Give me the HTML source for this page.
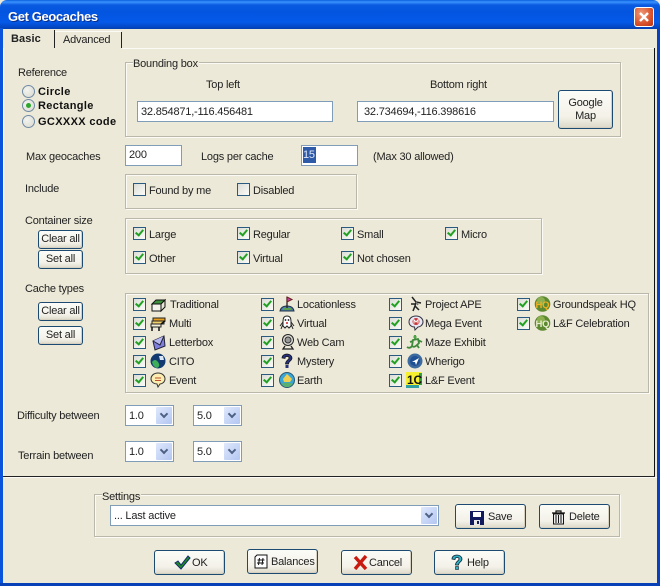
<!DOCTYPE html>
<html><head><meta charset="utf-8"><title>Get Geocaches</title>
<style>
html,body{margin:0;padding:0;background:#ece9d8}
#w{position:relative;width:660px;height:586px;overflow:hidden;background:#ece9d8;font:11px "Liberation Sans",sans-serif;color:#222;letter-spacing:-.2px}
#w *{box-sizing:border-box}
.t{position:absolute;white-space:nowrap;line-height:14px;height:14px}
.bd{font-weight:bold;letter-spacing:.35px;color:#111}
.g{position:absolute;border:1px solid #b9b8ab;box-shadow:inset 1px 1px 0 #fbfaf4,1px 1px 0 #fbfaf4}
.l{position:absolute;background:#ece9d8;padding:0 1px 0 0;white-space:nowrap;line-height:12px}
.i{position:absolute;background:#fff;border:1px solid #7f9db9;line-height:19px;padding-left:6px;white-space:nowrap}
.b{position:absolute;border:1px solid #1c4a70;border-radius:3px;background:linear-gradient(#fcfcf8,#f3f1e8 70%,#dcd8c8);text-align:center;white-space:nowrap;box-shadow:inset -1px -1px 0 #d6d0c0}
.c{position:absolute;width:13px;height:13px;border:1px solid #2a5a80;background:linear-gradient(135deg,#dcdcd7,#fbfbf8)}
.k::after{content:"";position:absolute;box-sizing:border-box;left:3px;top:0;width:5px;height:8px;border:solid #21a121;border-width:0 2px 2px 0;transform:rotate(40deg)}
.r{position:absolute;width:13px;height:13px;border-radius:50%;border:1px solid #6f8aa4;background:radial-gradient(circle at 35% 35%,#f4f4f0,#d8d8cf)}
.d{position:absolute;width:16px;height:17px;top:1px;right:1px;background:linear-gradient(135deg,#dfe8fc,#b3c6f2);border-radius:1px}
.d::after{content:"";position:absolute;box-sizing:border-box;left:5px;top:4px;width:6px;height:6px;border:solid #4d6185;border-width:0 2px 2px 0;transform:rotate(45deg)}
svg{position:absolute;display:block}
</style></head><body><div id="w">

<!-- title bar -->
<div style="position:absolute;left:0;top:0;width:660px;height:29px;border-radius:7px 7px 0 0;background:linear-gradient(#0a5fdc 0,#3a93ff 2px,#0a5ae0 5px,#0355e0 12px,#0459e8 22px,#0347c4 27px,#033fb0 29px)"></div>
<div class="t" style="left:8px;top:9px;font-weight:bold;font-size:13px;color:#fff;line-height:15px;height:15px;letter-spacing:-.38px;text-shadow:1px 1px 0 #0a2f8c">Get Geocaches</div>
<div style="position:absolute;left:634px;top:7px;width:20px;height:20px;border:1px solid #fff;border-radius:3px;background:radial-gradient(circle at 35% 30%,#ee9a78,#d9532c 60%,#b93212)"></div>
<svg style="left:634px;top:7px" width="20" height="20"><path d="M6 6L14 14M14 6L6 14" stroke="#fff" stroke-width="2.4" fill="none"/></svg>

<!-- borders -->
<div style="position:absolute;left:0;top:28px;width:3px;height:558px;background:#0a54dc"></div>
<div style="position:absolute;left:657px;top:28px;width:3px;height:558px;background:#0a3fc0"></div>
<div style="position:absolute;left:0;top:583px;width:660px;height:3px;background:#0840b8"></div>

<!-- tabs -->
<div style="position:absolute;left:122px;top:48px;width:533px;height:1px;background:#fbfaf4"></div>
<div style="position:absolute;left:654px;top:48px;width:1px;height:429px;background:#111"></div>
<div style="position:absolute;left:3px;top:476px;width:652px;height:1px;background:#222"></div>
<div style="position:absolute;left:3px;top:477px;width:654px;height:1px;background:#fbfaf4"></div>
<div style="position:absolute;left:3px;top:48px;width:1px;height:428px;background:#fbfaf4"></div>
<div class="t" style="left:11px;top:32px;font-weight:bold;letter-spacing:.1px">Basic</div>
<div style="position:absolute;left:54px;top:30px;width:1px;height:18px;background:#222"></div>
<div style="position:absolute;left:55px;top:31px;width:66px;height:1px;background:#fbfaf4"></div>
<div class="t" style="left:63px;top:33px">Advanced</div>
<div style="position:absolute;left:121px;top:32px;width:1px;height:16px;background:#222"></div>

<!-- reference -->
<div class="t" style="left:18px;top:66px">Reference</div>
<div class="r" style="left:22px;top:85px"></div><div class="t bd" style="left:38px;top:85px">Circle</div>
<div class="r" style="left:22px;top:99px"></div><div style="position:absolute;left:26px;top:103px;width:5px;height:5px;border-radius:50%;background:#2ea62e"></div><div class="t bd" style="left:38px;top:99px">Rectangle</div>
<div class="r" style="left:22px;top:115px"></div><div class="t bd" style="left:38px;top:115px">GCXXXX code</div>

<!-- bounding box -->
<div class="g" style="left:125px;top:62px;width:496px;height:75px"></div>
<div class="l" style="left:133px;top:58px;line-height:13px">Bounding box</div>
<div class="t" style="left:206px;top:78px">Top left</div>
<div class="t" style="left:430px;top:78px">Bottom right</div>
<div class="i" style="left:137px;top:101px;width:196px;height:21px;line-height:20px;padding-left:3px">32.854871,-116.456481</div>
<div class="i" style="left:357px;top:101px;width:197px;height:21px;line-height:20px;padding-left:6px">32.734694,-116.398616</div>
<div class="b" style="left:558px;top:90px;width:55px;height:39px;line-height:13px;padding-top:6px">Google<br>Map</div>

<!-- max -->
<div class="t" style="left:26px;top:150px">Max geocaches</div>
<div class="i" style="left:125px;top:145px;width:57px;height:21px;padding-left:3px">200</div>
<div class="t" style="left:201px;top:150px">Logs per cache</div>
<div class="i" style="left:301px;top:145px;width:57px;height:21px"></div>
<div class="t" style="left:303px;top:147px;width:13px;height:16px;background:#2f5aa8;color:#dfe6f5;line-height:17px">15</div>
<div class="t" style="left:373px;top:150px">(Max 30 allowed)</div>

<!-- include -->
<div class="t" style="left:25px;top:182px">Include</div>
<div class="g" style="left:125px;top:174px;width:232px;height:35px"></div>
<div class="c" style="left:133px;top:183px"></div><div class="t" style="left:149px;top:184px">Found by me</div>
<div class="c" style="left:237px;top:183px"></div><div class="t" style="left:253px;top:184px">Disabled</div>

<!-- container -->
<div class="t" style="left:25px;top:214px">Container size</div>
<div class="b" style="left:38px;top:230px;width:45px;height:19px;line-height:17px">Clear all</div>
<div class="b" style="left:38px;top:250px;width:45px;height:19px;line-height:17px">Set all</div>
<div class="g" style="left:125px;top:218px;width:417px;height:56px"></div>
<div class="c k" style="left:133px;top:227px"></div><div class="t" style="left:149px;top:228px">Large</div>
<div class="c k" style="left:237px;top:227px"></div><div class="t" style="left:253px;top:228px">Regular</div>
<div class="c k" style="left:341px;top:227px"></div><div class="t" style="left:357px;top:228px">Small</div>
<div class="c k" style="left:445px;top:227px"></div><div class="t" style="left:461px;top:228px">Micro</div>
<div class="c k" style="left:133px;top:251px"></div><div class="t" style="left:149px;top:252px">Other</div>
<div class="c k" style="left:237px;top:251px"></div><div class="t" style="left:253px;top:252px">Virtual</div>
<div class="c k" style="left:341px;top:251px"></div><div class="t" style="left:357px;top:252px">Not chosen</div>

<!-- cache types -->
<div class="t" style="left:25px;top:282px">Cache types</div>
<div class="b" style="left:38px;top:302px;width:45px;height:19px;line-height:17px">Clear all</div>
<div class="b" style="left:38px;top:326px;width:45px;height:19px;line-height:17px">Set all</div>
<div class="g" style="left:125px;top:293px;width:524px;height:100px"></div>

<div class="c k" style="left:133px;top:298px"></div><div class="c k" style="left:133px;top:317px"></div><div class="c k" style="left:133px;top:336px"></div><div class="c k" style="left:133px;top:355px"></div><div class="c k" style="left:133px;top:374px"></div>
<div class="c k" style="left:261px;top:298px"></div><div class="c k" style="left:261px;top:317px"></div><div class="c k" style="left:261px;top:336px"></div><div class="c k" style="left:261px;top:355px"></div><div class="c k" style="left:261px;top:374px"></div>
<div class="c k" style="left:389px;top:298px"></div><div class="c k" style="left:389px;top:317px"></div><div class="c k" style="left:389px;top:336px"></div><div class="c k" style="left:389px;top:355px"></div><div class="c k" style="left:389px;top:374px"></div>
<div class="c k" style="left:517px;top:298px"></div><div class="c k" style="left:517px;top:317px"></div>

<div class="t" style="left:170px;top:298px">Traditional</div>
<div class="t" style="left:169px;top:317px">Multi</div>
<div class="t" style="left:169px;top:336px">Letterbox</div>
<div class="t" style="left:169px;top:355px">CITO</div>
<div class="t" style="left:169px;top:374px">Event</div>
<div class="t" style="left:297px;top:298px">Locationless</div>
<div class="t" style="left:297px;top:317px">Virtual</div>
<div class="t" style="left:297px;top:336px">Web Cam</div>
<div class="t" style="left:297px;top:355px">Mystery</div>
<div class="t" style="left:297px;top:374px">Earth</div>
<div class="t" style="left:425px;top:298px">Project APE</div>
<div class="t" style="left:425px;top:317px">Mega Event</div>
<div class="t" style="left:425px;top:336px">Maze Exhibit</div>
<div class="t" style="left:425px;top:355px">Wherigo</div>
<div class="t" style="left:425px;top:374px">L&amp;F Event</div>
<div class="t" style="left:553px;top:298px">Groundspeak HQ</div>
<div class="t" style="left:553px;top:317px">L&amp;F Celebration</div>

<!-- icons col 1 -->
<svg style="left:150px;top:297px" width="16" height="16"><path d="M2 7L6 3H15L11 7Z" fill="#3f8f3f" stroke="#111"/><path d="M2 7H11V14H2Z" fill="#f4f4ea" stroke="#111"/><path d="M11 7L15 3V10L11 14Z" fill="#e8e8d8" stroke="#111"/></svg>
<svg style="left:150px;top:316px" width="16" height="16"><path d="M3 2H15V5H3Z" fill="#e8a020" stroke="#222"/><path d="M2 5H14V8H2Z" fill="#f2d070" stroke="#222"/><path d="M1 8H11V11H1Z" fill="#f4f0d8" stroke="#222"/><path d="M2 11V15M9 11V15M11 8L15 5" stroke="#111" fill="none" stroke-width="1.5"/></svg>
<svg style="left:151px;top:335px" width="16" height="16"><path d="M2 6L13 1L14 11L4 15Z" fill="#7f7fe0" stroke="#223"/><path d="M2 6L9 10L13 1" fill="#b6b6f0" stroke="#223"/></svg>
<svg style="left:150px;top:353px" width="16" height="16"><circle cx="8" cy="8" r="7.5" fill="#123a70"/><path d="M2 9Q5 5 8 9T7 15Q3 14 2 9Z" fill="#3fae5a"/><path d="M9 3H13L14 7H10Z" fill="#d8e6f5"/></svg>
<svg style="left:150px;top:372px" width="16" height="16"><path d="M8 1C12 1 15 3.500 15 7C15 10 12 12 10 12L8 15L7 12C4 12 1 10 1 7C1 3.500 4 1 8 1Z" fill="#fbeeb0" stroke="#333"/><path d="M5 6H11M5 8.500H11" stroke="#c05030"/></svg>

<!-- icons col 2 -->
<svg style="left:279px;top:296px" width="16" height="16"><path d="M1 15Q2 10 8 10T15 15Z" fill="#4f7fb0" stroke="#234"/><path d="M8 1V12" stroke="#222" stroke-width="1.300"/><path d="M8 1L13 3.500L8 6Z" fill="#d040a0" stroke="#622"/><path d="M4 13H12" stroke="#5aa050" stroke-width="2"/></svg>
<svg style="left:279px;top:315px" width="16" height="16"><path d="M8 1C11 1 12 3.500 12 6V11L10 13L8 11L6 13L4 11V6C4 3.500 5 1 8 1Z" fill="#fff" stroke="#222"/><path d="M4 7L1 11M12 7L15 11M4 9L2 14M12 9L14 14" stroke="#222" fill="none"/><circle cx="6.500" cy="5" r=".9" fill="#111"/><circle cx="9.500" cy="5" r=".9" fill="#111"/><path d="M7 8H9" stroke="#c22" stroke-width="1.500"/></svg>
<svg style="left:280px;top:334px" width="16" height="16"><circle cx="8" cy="6" r="5.500" fill="#dcdcd4" stroke="#222"/><circle cx="8" cy="6" r="3" fill="#999" stroke="#333"/><path d="M5 12L3 15H13L11 12" fill="none" stroke="#222" stroke-width="1.300"/></svg>
<svg style="left:279px;top:353px" width="16" height="16"><path d="M3 5C3 2 6 1 8 1C11 1 13 3 13 5C13 8 9.500 8 9.500 11H6.500C6.500 7 10 7 10 5C10 4 9 3.500 8 3.500C7 3.500 6 4 6 5.500Z" fill="#27307c" stroke="#111" stroke-width=".7"/><rect x="6.500" y="12" width="3" height="3" fill="#27307c"/></svg>
<svg style="left:279px;top:372px" width="16" height="16"><circle cx="8" cy="8" r="7.500" fill="#3aa6d8" stroke="#2a5a70"/><path d="M4 7L8 2L13 7L11 10H5Z" fill="#f0d050"/><path d="M2 12Q8 9 14 12L10 15H6Z" fill="#5ab070"/></svg>

<!-- icons col 3 -->
<svg style="left:408px;top:296px" width="16" height="16"><path d="M4 1L8 6L7 10L11 14M8 6L13 7M7 8L3 8M7 10L5 15" stroke="#222" stroke-width="1.500" fill="none"/><path d="M8 6L10 9" stroke="#777" stroke-width="1.500"/></svg>
<svg style="left:408px;top:315px" width="16" height="16"><path d="M8 1C12 1 15 3.500 15 7C15 10 12 12 10 12L7 15L6.500 12C3.500 12 1 10 1 7C1 3.500 4 1 8 1Z" fill="#e9e8f2" stroke="#334"/><circle cx="8" cy="6.500" r="3.500" fill="#c43a3a"/><path d="M6 8.500V4.800L8 7L10 4.800V8.500" stroke="#fff" fill="none" stroke-width="1"/></svg>
<svg style="left:406px;top:334px" width="18" height="16"><path d="M1 13Q4 15 6 12Q8 14 11 11L13 14M6 12L7 6L12 5L13 9L11 11M7 7L4 8M12 6L16 8M9 5V1" stroke="#3d8a3a" stroke-width="1.800" fill="none"/><circle cx="9" cy="3" r="1.600" fill="#4fa64a"/></svg>
<svg style="left:407px;top:353px" width="16" height="16"><circle cx="8" cy="8" r="7.500" fill="#3d6a9e"/><circle cx="8" cy="8" r="5" fill="#1f4f94"/><path d="M5 9L12 5L9 12L8 9Z" fill="#fff"/></svg>
<svg style="left:406px;top:372px" width="16" height="16"><rect width="16" height="13" fill="#f6f030"/><rect y="13" width="13" height="3" fill="#30a0a0"/><rect x="13" y="1" width="3" height="12" fill="#30a040"/><text x="1" y="12" font-family="Liberation Sans" font-size="12" font-weight="bold" fill="#111">1C</text></svg>

<!-- icons col 4 -->
<svg style="left:534px;top:296px" width="17" height="16"><circle cx="8.500" cy="8" r="7.800" fill="#5d8a30"/><circle cx="7" cy="5" r="4" fill="#8cb050"/><text x="1.500" y="12" font-family="Liberation Sans" font-size="9.500" font-weight="bold" fill="#f0b020">HQ</text></svg>
<svg style="left:534px;top:315px" width="17" height="16"><circle cx="8.500" cy="8" r="7.800" fill="#5d8a30"/><circle cx="7" cy="5" r="4" fill="#8cb050"/><text x="1.500" y="12" font-family="Liberation Sans" font-size="9.500" font-weight="bold" fill="#e8ecd0">HQ</text></svg>

<!-- between -->
<div class="t" style="left:17px;top:409px">Difficulty between</div>
<div class="i" style="left:125px;top:405px;width:49px;height:21px;line-height:20px;padding-left:3px">1.0<span class="d"></span></div>
<div class="i" style="left:193px;top:405px;width:49px;height:21px;line-height:20px;padding-left:3px">5.0<span class="d"></span></div>
<div class="t" style="left:18px;top:449px">Terrain between</div>
<div class="i" style="left:125px;top:441px;width:49px;height:21px;line-height:20px;padding-left:3px">1.0<span class="d"></span></div>
<div class="i" style="left:193px;top:441px;width:49px;height:21px;line-height:20px;padding-left:3px">5.0<span class="d"></span></div>

<!-- settings -->
<div class="g" style="left:94px;top:494px;width:526px;height:43px"></div>
<div class="l" style="left:102px;top:491px">Settings</div>
<div class="i" style="left:110px;top:505px;width:329px;height:21px;line-height:21px;padding-left:3px">... Last active<span class="d"></span></div>

<div class="b" style="left:455px;top:504px;width:71px;height:25px;line-height:25px;padding-left:32px;text-align:left">Save</div>
<svg style="left:470px;top:511px" width="14" height="14"><path d="M0 0H14V14H0Z" fill="#101a5c"/><rect x="3" y="1" width="8" height="5" fill="#fff"/><rect x="4" y="9" width="6" height="5" fill="#e8e8e8"/><rect x="7" y="10" width="2" height="3" fill="#101a5c"/></svg>
<div class="b" style="left:539px;top:504px;width:71px;height:25px;line-height:25px;padding-left:29px;text-align:left">Delete</div>
<svg style="left:551px;top:509px" width="15" height="16"><path d="M1 4H14M5 4V2H10V4" stroke="#111" fill="none" stroke-width="1.200"/><path d="M2.500 5H12.500V15H2.500Z" fill="#eee" stroke="#111"/><path d="M5 6V14M7.500 6V14M10 6V14" stroke="#111"/></svg>

<div class="b" style="left:154px;top:550px;width:71px;height:25px;line-height:25px;padding-left:37px;text-align:left">OK</div>
<svg style="left:174px;top:555px" width="17" height="15"><path d="M1 8L4 6L7 10L14 1L16 3L7 14Z" fill="#1f8a20" stroke="#102a70" stroke-width="1"/></svg>
<div class="b" style="left:247px;top:549px;width:71px;height:25px;line-height:25px;padding-left:23px;text-align:left">Balances</div>
<svg style="left:254px;top:554px" width="14" height="15"><path d="M1 3L3 1H13V14H1Z" fill="#fff" stroke="#111"/><path d="M5.500 4L4.500 11M9 4L8 11M3.500 6H10.500M3 9H10" stroke="#111"/></svg>
<div class="b" style="left:341px;top:550px;width:71px;height:25px;line-height:25px;padding-left:27px;text-align:left">Cancel</div>
<svg style="left:353px;top:555px" width="15" height="15"><path d="M2 2L13 14M13 1L2 14" stroke="#c81a10" stroke-width="3.400"/></svg>
<div class="b" style="left:434px;top:550px;width:71px;height:25px;line-height:25px;padding-left:32px;text-align:left">Help</div>
<svg style="left:451px;top:554px" width="12" height="17"><path d="M1 5C1 2 4 1 6 1C9 1 11 3 11 5C11 8 7.500 8 7.500 11H4.500C4.500 7 8 7 8 5C8 4 7 3.500 6 3.500C5 3.500 4 4 4 5.500Z" fill="#2fb0c0" stroke="#123" stroke-width=".8"/><rect x="4.500" y="12.500" width="3" height="3" fill="#2fb0c0" stroke="#123" stroke-width=".6"/></svg>

</div></body></html>
